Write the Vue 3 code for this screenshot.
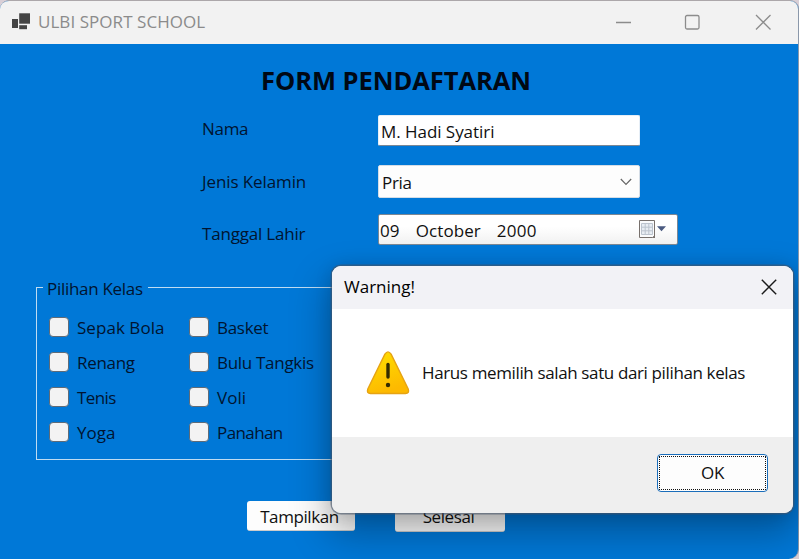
<script setup>
const classes = [
  { name: 'Sepak Bola', spacing: 'loose' },
  { name: 'Basket', spacing: '' },
  { name: 'Renang', spacing: '' },
  { name: 'Bulu Tangkis', spacing: '' },
  { name: 'Tenis', spacing: 'tight' },
  { name: 'Voli', spacing: 'loose' },
  { name: 'Yoga', spacing: 'loose' },
  { name: 'Panahan', spacing: 'tight' },
]
</script>

<template>
  <div class="desktop">
    <main class="window">
      <header class="titlebar">
        <svg class="app-icon" width="19" height="18" viewBox="0 0 19 18">
          <rect x="7.2" y="0.3" width="10.8" height="10.4" />
          <rect x="0" y="6" width="6" height="9" />
          <rect x="7.2" y="12.2" width="7.8" height="4" />
        </svg>
        <span class="app-name">ULBI SPORT SCHOOL</span>
        <svg class="controls" width="158" height="18" viewBox="0 0 158 18">
          <path d="M1 9.5H16" />
          <rect x="70.5" y="2.5" width="13.5" height="13.5" rx="1.5" />
          <path d="M141 2L155.5 16.5M155.5 2L141 16.5" />
        </svg>
      </header>

      <h1>FORM PENDAFTARAN</h1>

      <section class="fields">
        <span class="label">Nama</span>
        <div class="input"><span>M. Hadi Syatiri</span></div>
        <span class="label jenis">Jenis Kelamin</span>
        <div class="input select">
          <span>Pria</span>
          <svg width="12" height="8" viewBox="0 0 12 8"><path d="M0.8 1L6 6.3L11.2 1" /></svg>
        </div>
        <span class="label tanggal">Tanggal Lahir</span>
        <div class="input date">
          <span>09</span><span class="month">October</span><span class="year">2000</span>
          <svg width="29" height="19" viewBox="0 0 29 19">
            <path d="M1.500 0.500H16.500V16L14.500 17.500H1.500Z" fill="#fafbfc" stroke="#77706c" />
            <path d="M3.500 3.500H14.500V14.500H3.500Z" fill="#e8edf3" />
            <path d="M3.500 3.500H14.500V14.500H3.500ZM7.200 3.500V14.500M10.800 3.500V14.500M3.500 7.200H14.500M3.500 10.800H14.500" fill="none" stroke="#bcc4ce" />
            <path d="M14.200 18H17V15.200Z" fill="#77706c" />
            <path d="M19 6.200H28L23.500 11.300Z" fill="#4a5a80" />
          </svg>
        </div>
      </section>

      <section class="group">
        <span class="legend">Pilihan Kelas</span>
        <div class="checks">
          <div v-for="c in classes" :key="c.name" class="check">
            <span class="box"></span><span class="check-name" :class="c.spacing">{{ c.name }}</span>
          </div>
        </div>
      </section>

      <footer class="actions">
        <div class="btn"><span>Tampilkan</span></div>
        <div class="btn done"><span>Selesai</span></div>
      </footer>
    </main>

    <section class="dialog">
      <header class="dialog-head">
        <span>Warning!</span>
        <svg width="16" height="16" viewBox="0 0 16 16"><path d="M0.8 0.8L15.2 15.2M15.2 0.8L0.8 15.2" /></svg>
      </header>
      <div class="dialog-body">
        <svg width="44" height="44" viewBox="0 0 44 44">
          <defs>
            <linearGradient id="amber" x1="0" y1="0" x2="0.35" y2="1">
              <stop offset="0" stop-color="#ffe000" />
              <stop offset="1" stop-color="#fdb900" />
            </linearGradient>
          </defs>
          <path d="M18.9 3.2Q22 -1.4 25.1 3.2L42.2 38Q43.6 42.3 39.5 42.5H4.5Q0.4 42.3 1.8 38Z" fill="url(#amber)" stroke="#e6a313" stroke-width="1.4" />
          <path d="M22 13.5V26" stroke="#332b00" stroke-width="3.4" stroke-linecap="round" />
          <circle cx="22" cy="34" r="2.2" fill="#332b00" />
        </svg>
        <span>Harus memilih salah satu dari pilihan kelas</span>
      </div>
      <footer class="dialog-foot">
        <div class="ok"><span>OK</span></div>
      </footer>
    </section>
  </div>
</template>

<style>
body { overflow: hidden; }
</style>

<style scoped>
* { box-sizing: border-box; }
.desktop {
  position: relative;
  width: 799px;
  height: 559px;
  overflow: hidden;
  background: #d9cfd6;
  font: 17px/24px "Open Sans", "Noto Sans", sans-serif;
  color: #101010;
  white-space: nowrap;
}
.window {
  width: 799px;
  height: 559px;
  background: #0078d7;
  border-top: 1px solid #aca7aa;
  border-right: 1px solid #8b98aa;
  border-radius: 9px 9px 10px 0;
  overflow: hidden;
}
.titlebar {
  display: flex;
  align-items: center;
  height: 43px;
  padding: 0 0 2px 12px;
  background: #f2f2f2;
  color: #8b8b8b;
}
.app-icon { fill: #444; flex: none; }
.app-name { margin-left: 7px; letter-spacing: 0.05px; }
.controls {
  margin-left: auto;
  margin-right: 25px;
  fill: none;
  stroke: #8c8c8c;
  stroke-width: 1.3;
}
h1 {
  margin: 18px 0 0 261px;
  font-size: 25.5px;
  line-height: 36px;
  font-weight: 700;
  letter-spacing: -0.05px;
  color: #000814;
}
.fields {
  display: grid;
  grid-template-columns: 176px 300px;
  grid-template-rows: 50px 49px 31px;
  margin: 17px 0 0 202px;
}
.label { color: #001430; line-height: 27px; letter-spacing: -0.3px; }
.label.jenis { line-height: 34px; letter-spacing: -0.1px; }
.label.tanggal { line-height: 39px; letter-spacing: -0.2px; }
.input {
  display: flex;
  align-items: center;
  width: 262px;
  height: 31px;
  padding-left: 2px;
  background: #fff;
  border: 1px solid #e6eef6;
  border-bottom-color: #7a8795;
  border-radius: 2px;
  letter-spacing: -0.05px;
}
.input > span { margin-top: 2px; }
.select {
  height: 33px;
  padding: 0 7px 0 3px;
  justify-content: space-between;
  background: #fdfdfd;
  border-color: #d5dde6;
  letter-spacing: -0.3px;
}
.select svg { fill: none; stroke: #666; stroke-width: 1.2; }
.date {
  width: 300px;
  padding-left: 1px;
  padding-right: 10px;
  border-color: #7b8794;
  background: linear-gradient(#fff 40%, #f1f1f1);
}
.month { margin-left: 16.5px; letter-spacing: 0.05px; }
.year { margin-left: 16px; letter-spacing: 0.3px; }
.date svg { margin-left: auto; }
.group {
  width: 500px;
  height: 173px;
  margin: 42px 0 0 36px;
  border: 1px solid #bfdcf2;
  color: #001430;
}
.legend {
  display: block;
  width: 105px;
  height: 24px;
  margin: -11px 0 0 6px;
  padding-left: 4px;
  background: #0078d7;
  letter-spacing: -0.3px;
}
.checks {
  display: grid;
  grid-template-columns: 140px 140px;
  grid-auto-rows: 35px;
  margin: 9px 0 0 12px;
}
.check { display: flex; align-items: center; gap: 8px; padding-bottom: 1px; }
.box {
  width: 20px;
  height: 20px;
  background: #f3f3f3;
  border: 1px solid #5e6b78;
  border-radius: 4px;
}
.check-name { margin-top: 2px; letter-spacing: -0.3px; }
.check-name.loose { letter-spacing: 0.05px; }
.check-name.tight { letter-spacing: -0.6px; }
.actions { display: flex; gap: 40px; margin: 41px 0 0 247px; }
.btn {
  display: flex;
  align-items: center;
  justify-content: center;
  width: 108px;
  height: 30px;
  padding: 2px 3px 0 0;
  background: #fdfdfd;
  border-radius: 3px;
  border-bottom: 1px solid #ccc;
  letter-spacing: -0.4px;
}
.done { width: 110px; height: 31px; }
.dialog {
  position: absolute;
  left: 332px;
  top: 266px;
  width: 461px;
  height: 247px;
  border-radius: 9px;
  background: #fff;
  box-shadow:
    0 0 0 1.5px rgba(70, 85, 105, 0.6),
    0 2px 18px rgba(0, 0, 0, 0.14),
    0 18px 38px 4px rgba(0, 0, 0, 0.28);
}
.dialog-head {
  display: flex;
  align-items: center;
  justify-content: space-between;
  height: 43px;
  padding: 0 16px 1px 12px;
  background: #f2f2f6;
  border-radius: 9px 9px 0 0;
  color: #000;
}
.dialog-head svg { fill: none; stroke: #1a1a1a; stroke-width: 1.4; }
.dialog-body { display: flex; align-items: center; gap: 12px; height: 128px; padding-left: 34px; letter-spacing: -0.37px; }
.dialog-foot {
  display: flex;
  justify-content: flex-end;
  height: 76px;
  padding: 17px 25px 0 0;
  background: #efefef;
  border-radius: 0 0 9px 9px;
}
.ok {
  width: 111px;
  height: 38px;
  padding: 1px;
  background: #fdfdfd;
  border: 1px solid #1a6dba;
  border-radius: 4px;
  text-align: center;
}
.ok span { display: block; height: 34px; border: 1px dotted #111; line-height: 32px; letter-spacing: -0.4px; }
</style>
